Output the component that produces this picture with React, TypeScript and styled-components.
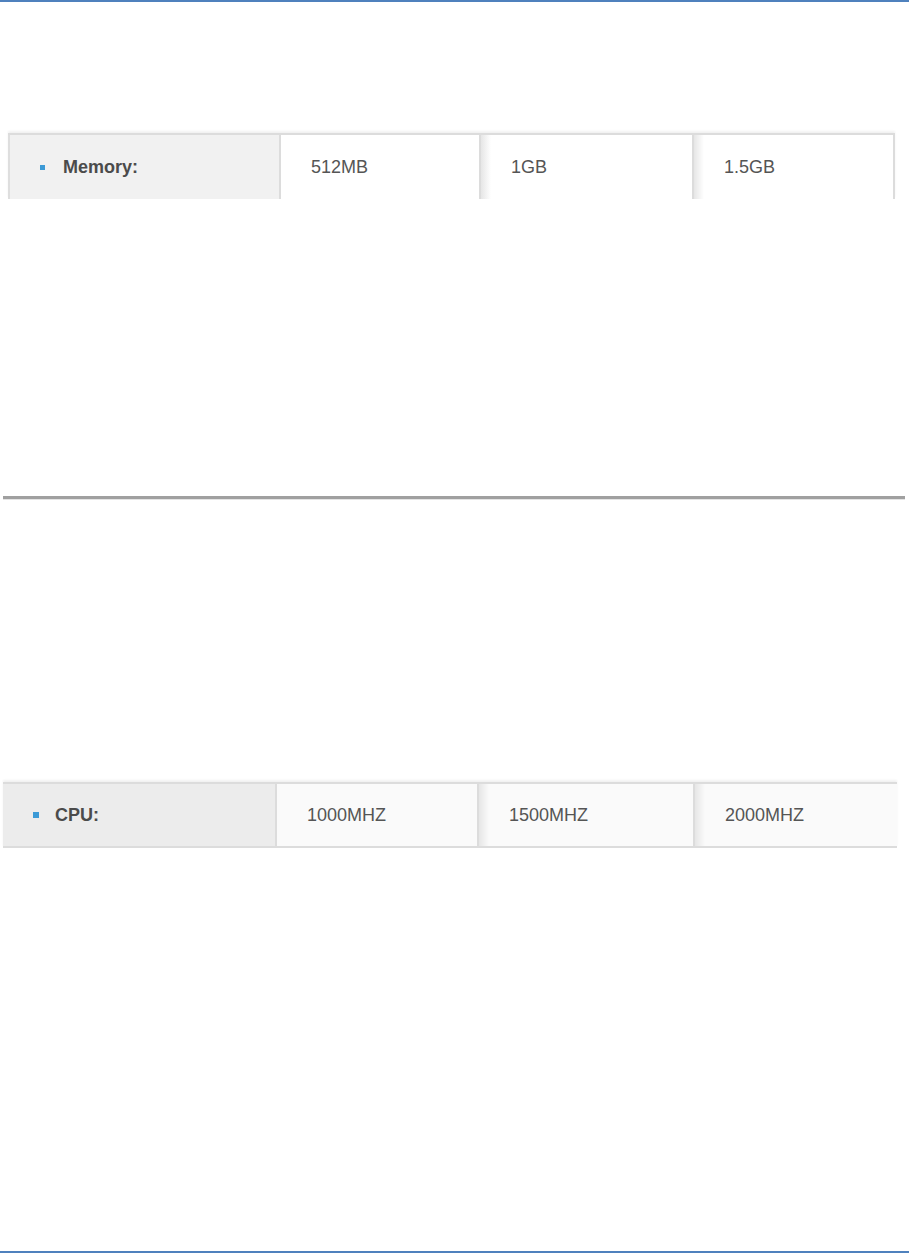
import styled, { createGlobalStyle } from 'styled-components';

const GlobalStyle = createGlobalStyle`
  html, body {
    margin: 0;
    padding: 0;
    background: #ffffff;
  }
  body {
    font-family: "Liberation Sans", Arial, sans-serif;
  }
`;

type Spec = {
  label: string;
  values: string[];
  columns: string;
  variant: 'memory' | 'cpu';
};

const specs: Spec[] = [
  {
    label: 'Memory:',
    values: ['512MB', '1GB', '1.5GB'],
    columns: '273px 200px 213px 201px',
    variant: 'memory',
  },
  {
    label: 'CPU:',
    values: ['1000MHZ', '1500MHZ', '2000MHZ'],
    columns: '274px 202px 216px 202px',
    variant: 'cpu',
  },
];

export default function App() {
  const [memory, cpu] = specs;

  return (
    <>
      <GlobalStyle />
      <Page>
        <Section $top={131} $left={8} $right={14}>
          <SpecRow spec={memory} />
        </Section>
        <Rule />
        <Section $top={283} $left={3} $right={12}>
          <SpecRow spec={cpu} />
        </Section>
        <Filler />
      </Page>
    </>
  );
}

const SpecRow = ({ spec }: { spec: Spec }) => {
  const cpu = spec.variant === 'cpu';
  return (
    <Row $columns={spec.columns} $cpu={cpu}>
      <LabelCell $cpu={cpu}>
        <Bullet $cpu={cpu} />
        <Label>{spec.label}</Label>
      </LabelCell>
      {spec.values.map((value, i) => (
        <ValueCell
          key={value}
          $cpu={cpu}
          $shaded={i > 0}
          $last={i === spec.values.length - 1}
        >
          {value}
        </ValueCell>
      ))}
    </Row>
  );
};

const Page = styled.main`
  height: 1253px;
  box-sizing: border-box;
  display: flex;
  flex-direction: column;
  border-top: 2px solid #4f81bd;
  border-bottom: 2px solid #4f81bd;
`;

const Section = styled.section<{ $top: number; $left: number; $right: number }>`
  padding: ${({ $top, $left, $right }) => `${$top}px ${$right}px 0 ${$left}px`};
`;

const Rule = styled.hr`
  margin: 297px 4px 0 3px;
  height: 3px;
  border: none;
  background: #a0a0a0;
  box-shadow: 0 1px 0 #e4e4e4;
`;

const Filler = styled.div`
  flex: 1;
`;

const Row = styled.div<{ $columns: string; $cpu: boolean }>`
  display: grid;
  grid-template-columns: ${({ $columns }) => $columns};
  height: 66px;
  box-sizing: border-box;
  border-top: 2px solid #dcdcdc;
  border-bottom: ${({ $cpu }) => ($cpu ? '2px solid #dcdcdc' : 'none')};
  box-shadow: 0 -2px 2px #f2f2f2;
  font-size: 18px;
`;

const LabelCell = styled.div<{ $cpu: boolean }>`
  display: flex;
  align-items: center;
  box-sizing: border-box;
  padding-left: 30px;
  background: ${({ $cpu }) => ($cpu ? '#ececec' : '#f1f1f1')};
  border-left: ${({ $cpu }) => ($cpu ? 'none' : '2px solid #dedede')};
  border-right: 2px solid #dcdcdc;
`;

const Bullet = styled.span<{ $cpu: boolean }>`
  width: ${({ $cpu }) => ($cpu ? 6 : 5)}px;
  height: ${({ $cpu }) => ($cpu ? 6 : 5)}px;
  margin-right: ${({ $cpu }) => ($cpu ? 16 : 18)}px;
  background: #3c9ad6;
  flex-shrink: 0;
`;

const Label = styled.span`
  font-weight: bold;
  color: #4b4b4b;
`;

const ValueCell = styled.div<{ $cpu: boolean; $shaded: boolean; $last: boolean }>`
  display: flex;
  align-items: center;
  box-sizing: border-box;
  padding-left: 30px;
  color: #555555;
  background: ${({ $cpu, $shaded }) => {
    const base = $cpu ? '#fafafa' : '#ffffff';
    return $shaded ? `linear-gradient(to right, #e6e6e6, ${base} 10px)` : base;
  }};
  border-right: ${({ $cpu, $last }) =>
    $cpu && $last ? 'none' : '2px solid #dcdcdc'};
`;
